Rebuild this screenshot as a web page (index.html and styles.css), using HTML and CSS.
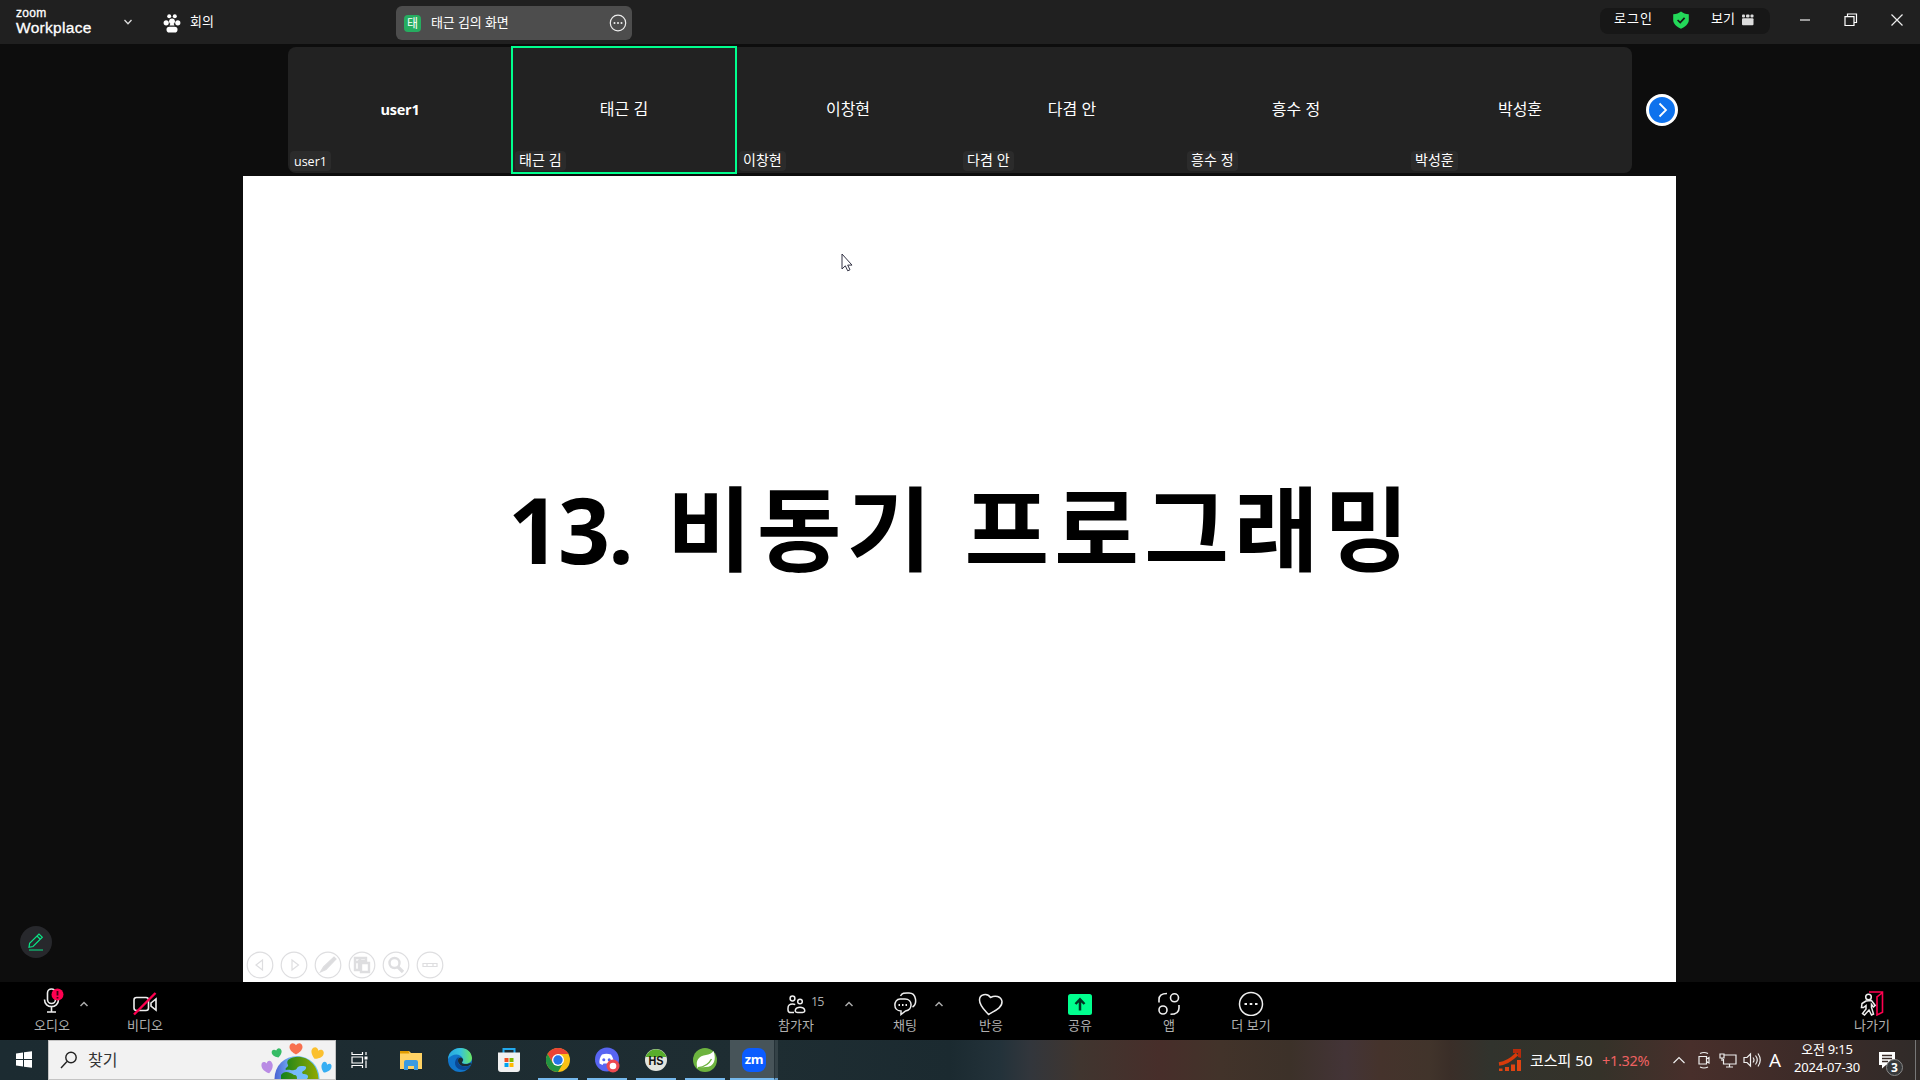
FILE: index.html
```html
<!DOCTYPE html>
<html lang="ko">
<head>
<meta charset="utf-8">
<title>Zoom Workplace</title>
<link rel="stylesheet" href="styles.css">
</head>
<body>
<div class="app">
  <header class="titlebar">
    <div class="brand"><span class="brand-zoom">zoom</span><span class="brand-name">Workplace</span></div>
    <svg class="brand-chevron" width="10" height="8" viewBox="0 0 10 8"><path d="M1.5 2l3.500 3.700L8.500 2" fill="none" stroke="#ddd" stroke-width="1.300"/></svg>
    <svg class="paw" width="18" height="20" viewBox="0 0 18 20" fill="#fff"><circle cx="6.200" cy="3.300" r="2"/><circle cx="11.800" cy="3.300" r="2"/><circle cx="3.200" cy="9.800" r="2.600"/><circle cx="14.800" cy="9.800" r="2.600"/><circle cx="9" cy="8.300" r="2.900"/><path d="M7.500 10.500h3l1 2h-5z"/><rect x="3.500" y="13.800" width="11" height="5.700" rx="2.800"/></svg>
    <span class="meeting">회의</span>
    <div class="share-tab">
      <span class="avatar">태</span><span class="share-name">태근 김의 화면</span>
      <svg width="18" height="20" viewBox="0 0 18 20"><ellipse cx="9" cy="10" rx="7.700" ry="7.900" fill="none" stroke="#eee" stroke-width="1.200"/><g fill="#eee"><circle cx="5.500" cy="10" r="1"/><circle cx="9" cy="10" r="1"/><circle cx="12.500" cy="10" r="1"/></g></svg>
    </div>
    <div class="account">
      <span class="login">로그인</span>
      <svg width="16" height="18" viewBox="0 0 16 18"><path d="M8 .5c2 1.700 4.500 2.500 7.800 2.700V9c0 4-3.800 7-7.800 8.700C4 16 .2 13 .2 9V3.200C3.500 3 6 2.200 8 .5z" fill="#23d959"/><path d="M4.600 9l2.600 2.500 4.400-4.700" fill="none" stroke="#171717" stroke-width="1.700"/></svg>
      <span class="view">보기</span>
      <svg class="view-icon" width="12" height="12" viewBox="0 0 12 12" fill="#ddd"><rect y="0.500" width="3" height="3" rx="1"/><rect x="4" y="0.500" width="3.500" height="3" rx="1"/><rect x="8.500" y="0.500" width="3" height="3" rx="1"/><rect y="4.200" width="11.500" height="7" rx="1"/></svg>
    </div>
    <div class="window-controls">
      <svg width="12" height="14" viewBox="0 0 12 14"><path d="M1 7h10" stroke="#bbb" stroke-width="1.600"/></svg>
      <svg width="14" height="14" viewBox="0 0 14 14" fill="none" stroke="#fff" stroke-width="1.200"><path d="M1 3.600h9v8.900H1zM3.500 3.500V1h9v8.500H10"/></svg>
      <svg width="14" height="14" viewBox="0 0 14 14" fill="none" stroke="#eee" stroke-width="1.200"><path d="M1.500 1.500l11 11M12.500 1.500l-11 11"/></svg>
    </div>
  </header>

  <section class="gallery">
    <div class="tiles">
      <div class="tile"><span class="tile-name latin">user1</span><span class="tile-tag">user1</span></div>
      <div class="tile active"><span class="tile-name">태근 김</span><span class="tile-tag">태근 김</span></div>
      <div class="tile"><span class="tile-name">이창현</span><span class="tile-tag">이창현</span></div>
      <div class="tile"><span class="tile-name">다겸 안</span><span class="tile-tag">다겸 안</span></div>
      <div class="tile"><span class="tile-name">흥수 정</span><span class="tile-tag">흥수 정</span></div>
      <div class="tile"><span class="tile-name">박성훈</span><span class="tile-tag">박성훈</span></div>
    </div>
    <div class="next"><svg width="32" height="32" viewBox="0 0 32 32"><circle cx="16" cy="16" r="14.500" fill="#0e72ed" stroke="#fff" stroke-width="3"/><path d="M13.500 9.500l6.500 6.500-6.500 6.500" fill="none" stroke="#fff" stroke-width="1.800"/></svg></div>
  </section>

  <main class="stage">
    <div class="side"><div class="annotate"><svg width="16" height="18" viewBox="0 0 16 18" fill="none" stroke="#0be285" stroke-width="1.200"><path d="M1 14.300l.6-4L11 1l3.300 3.200L5 13.500zM9 3l3.300 3.200M1 17h14"/></svg></div></div>
    <div class="slide">
      <h1><span class="number">13.</span> <span class="word">비동기</span> <span class="word">프로그래밍</span></h1>
      <svg class="cursor" width="12" height="20" viewBox="0 0 12 20"><path d="M1 1v15l3.300-3.200 2.400 5 2.300-1-2.300-4.700H11z" fill="#fff" stroke="#334" stroke-width="1"/></svg>
      <div class="slide-controls">
        <svg viewBox="0 0 28 28"><circle cx="14" cy="14" r="12.800"/><path d="M16.500 9v10L10 14z"/></svg>
        <svg viewBox="0 0 28 28"><circle cx="14" cy="14" r="12.800"/><path d="M12 9v10l6.500-5z"/></svg>
        <svg viewBox="0 0 28 28"><circle cx="14" cy="14" r="12.800"/><path d="M6.500 21l3-5L20 6l2 2-10 10.500z" fill="#dcdcde"/></svg>
        <svg viewBox="0 0 28 28"><circle cx="14" cy="14" r="12.800"/><path d="M7 7h11v3h-7v9H7zM7 11h4M12 7v3" stroke-width="2.400"/><path d="M13 12h8v9h-8z" stroke-width="2.400"/></svg>
        <svg viewBox="0 0 28 28"><circle cx="14" cy="14" r="12.800"/><circle cx="12.500" cy="12" r="5" stroke-width="2.400"/><path d="M16 16l5 5" stroke-width="3.200"/></svg>
        <svg viewBox="0 0 28 28"><circle cx="14" cy="14" r="12.800"/><path d="M7 12.500h14v3H7zM11 13v3M17 13v3"/></svg>
      </div>
    </div>
    <div class="side"></div>
  </main>

  <nav class="toolbar">
    <div class="tool audio"><svg width="24" height="26" viewBox="0 0 24 26"><g fill="none" stroke="#eee" stroke-width="1.600"><rect x="7.500" y="1" width="8" height="14.500" rx="4"/><path d="M4.500 11.500c0 9.500 14 9.500 14 0M11.500 18.500v5M7 24h9"/></g><circle cx="17.500" cy="6.500" r="6" fill="#ff0050"/><path d="M17.500 3v4.600M17.500 9v1.500" stroke="#400014" stroke-width="1.800"/></svg><span>오디오</span></div>
    <svg class="caret" viewBox="0 0 12 8"><path d="M2.500 6L6 2.500 9.500 6"/></svg>
    <div class="tool video"><svg width="26" height="26" viewBox="0 0 26 26"><g fill="none" stroke="#eee" stroke-width="1.600"><rect x="2" y="7.500" width="14.500" height="13" rx="2.500"/><path d="M19 13l5-4v11l-5-4z"/></g><path d="M2 24.500L23.500 3" stroke="#ff0050" stroke-width="2.400"/></svg><span>비디오</span></div>
    <div class="tool people"><svg width="24" height="26" viewBox="0 0 24 26" fill="none" stroke="#eee" stroke-width="1.500"><circle cx="8.500" cy="8.500" r="2.400"/><circle cx="16" cy="11.500" r="2.300"/><path d="M10 22.500H7c-2 0-3-.7-3-2.600v-1.600c0-3 1.700-4.300 4.500-4.300 1.200 0 2 .2 2.700.7"/><path d="M13.500 22.500c-2.500 0-2.500-1.500-2-3 1.200-3 7.800-3 9 0 .5 1.500.5 3-2 3z"/></svg><span>참가자</span><b class="count">15</b></div>
    <svg class="caret c2" viewBox="0 0 12 8"><path d="M2.500 6L6 2.500 9.500 6"/></svg>
    <div class="tool chat"><svg width="24" height="26" viewBox="0 0 24 26" fill="none" stroke="#eee" stroke-width="1.500"><path d="M8 24.500V21C-.5 21 .5 9 7 9h5c8 0 8 11 .5 12z"/><path d="M7.500 6C9.500 2.500 12 3 16 3c7.500 0 8.500 11 3.500 14"/><path d="M5.500 15h1.500M9 15h1.500M12.500 15H14" stroke-width="1.800"/></svg><span>채팅</span></div>
    <svg class="caret c3" viewBox="0 0 12 8"><path d="M2.500 6L6 2.500 9.500 6"/></svg>
    <div class="tool react"><svg width="26" height="26" viewBox="0 0 26 26" fill="none" stroke="#eee" stroke-width="1.500"><path d="M10.500 24.500C7 20.500 1.500 16 1.500 10c0-5.500 7.500-7.500 11-2.500C17 5 23 6 24 11.500 24.500 18 16 21 10.500 24.500z" stroke-linejoin="round"/></svg><span>반응</span></div>
    <div class="tool share"><svg width="24" height="26" viewBox="0 0 24 26"><rect y="4" width="24" height="21" rx="2.500" fill="#00ff8e"/><path d="M12 20.500V9.500M7.500 14L12 9.300l4.500 4.700" fill="none" stroke="#032" stroke-width="2.500"/></svg><span>공유</span></div>
    <div class="tool apps"><svg width="24" height="26" viewBox="0 0 24 26" fill="none" stroke="#eee" stroke-width="1.600"><circle cx="17.500" cy="7.800" r="4"/><circle cx="6" cy="20" r="4"/><path d="M2 12.500v-3c0-4 2-6 8-6M22 15v3c0 4.500-3 6.300-8.500 6.300"/></svg><span>앱</span></div>
    <div class="tool more"><svg width="26" height="26" viewBox="0 0 26 26"><circle cx="13" cy="14" r="11.500" fill="none" stroke="#eee" stroke-width="1.500"/><path d="M6.500 14h2.500M11.700 14h2.600M17 14h2.500" stroke="#eee" stroke-width="2"/></svg><span>더 보기</span></div>
    <div class="tool leave"><svg width="26" height="26" viewBox="0 0 26 26" fill="none"><path d="M10 2h13.500v20.300L18 25V7l5-4" stroke="#ff0050" stroke-width="1.600"/><g stroke="#eee" stroke-width="1.500"><circle cx="9.500" cy="7" r="2.800"/><path d="M7 11L3 13.500l-.5 4h2L7 15.500V19L3.500 23.500l2 1.500L10 20l2.500 5 2-1-2-6.500v-3l2 2.500 1.700-1.500-3.700-5z"/></g></svg><span>나가기</span></div>
  </nav>

  <footer class="taskbar">
    <div class="start"><svg width="16" height="17" viewBox="0 0 16 17" fill="#fff"><path d="M0 2.500L7 1.500v6.500H0zM8 1.300L16 .2V8H8zM0 9h7v6.500L0 14.500zM8 9h8v7.800L8 15.700z"/></svg></div>
    <div class="search">
      <svg width="18" height="18" viewBox="0 0 18 18" fill="none" stroke="#222" stroke-width="1.400"><circle cx="11" cy="6.500" r="5.200"/><path d="M7 10.500L1 17"/></svg>
      <span>찾기</span>
      <svg class="earth" width="72" height="38" viewBox="0 0 72 38">
        <defs><linearGradient id="sea"><stop offset="0" stop-color="#4a62d2"/><stop offset=".4" stop-color="#79b8fa"/><stop offset="1" stop-color="#67c6fd"/></linearGradient><linearGradient id="land"><stop offset="0" stop-color="#13811c"/><stop offset="1" stop-color="#92a900"/></linearGradient>
        <path id="heart" d="M0 6.500C-3 5-7 2-7-1.500-7-6.500-2-7 0-3.500 2-7 7-6.500 7-1.500 7 2 3 5 0 6.500z"/></defs>
        <circle cx="36" cy="37.500" r="22.500" fill="url(#sea)"/>
        <path d="M27 19c7-5.500 18-4 24 3 4 4 6 9 6.500 16H46c3-4-1-5-4-5-3-3 3-3 3-6 1-2-3-2-5-2-5 0-3 4-7 4-2 1-4-1-8 0-2-2 3-3 2-5-1-2-1-3 0-5zM20 34c3-5 9-3 13 0 3 0 3 2 3 4H20z" fill="url(#land)"/>
        <use href="#heart" transform="translate(35 7.500) scale(.93)" fill="#f8704e"/>
        <use href="#heart" transform="translate(16 12) rotate(-18) scale(.72)" fill="#36bc65"/>
        <use href="#heart" transform="translate(56 12.500) rotate(25) scale(.9)" fill="#fbc02e"/>
        <use href="#heart" transform="translate(6.500 26) rotate(-15) scale(.8 1)" fill="#b98be4"/>
        <use href="#heart" transform="translate(65 26.500) rotate(22) scale(.72 .85)" fill="#35aef3"/>
      </svg>
    </div>
    <div class="task plain"><svg width="18" height="18" viewBox="0 0 18 18" fill="none" stroke="#fff" stroke-width="1.200"><path d="M1 1v2.500h10.500V1M1 17v-2.500h10.500V17M1 6h10.500v6H1zM15 1v3M15 9.500V17"/><path d="M13.500 7h3" stroke-width="3"/></svg></div>
    <div class="task plain explorer"><svg width="24" height="24" viewBox="0 0 24 24"><path d="M1 3h9l2 2h11v16H1z" fill="#ffd264"/><path d="M1 3h8.500l1 2.500H1z" fill="#e19b00"/><path d="M5 22v-8q0-2 2-2h10q2 0 2 2v8h-4v-4H9v4z" fill="#3b9be0"/></svg></div>
    <div class="task plain"><svg width="24" height="24" viewBox="0 0 24 24"><defs><linearGradient id="edge"><stop offset="0" stop-color="#27a8df"/><stop offset=".5" stop-color="#35c1df"/><stop offset="1" stop-color="#6be860"/></linearGradient></defs><circle cx="12" cy="12" r="12" fill="#1075ca"/><path d="M0 11C1-3 23-4 24 10c0 5-6 7-10 5-1-1 2-1 1-4C13 5 4 5 0 11z" fill="url(#edge)"/><path d="M9 10c-5 6 0 13 8 12 3-.5 5-3 6-5-7 4-14 0-13-5 .1-1 .5-2 1-3z" fill="#0a4896"/><path d="M14.500 10.500c2 2-1.500 3 0 5 3 1 7 .5 8-1l.5 2c-6 4-13 1-13-4 0-3 3-4 4.500-2z" fill="#1c2b30"/></svg></div>
    <div class="task plain"><svg width="24" height="24" viewBox="0 0 24 24"><path d="M6.500 6V1h11v5" fill="none" stroke="#22a9ee" stroke-width="2"/><path d="M1 4.500h22V21q0 3-3 3H4q-3 0-3-3z" fill="#f1f1f1"/><path d="M7.500 10h4v4h-4z" fill="#f25022"/><path d="M12.500 10h4v4h-4z" fill="#7fba00"/><path d="M7.500 15h4v4h-4z" fill="#00a4ef"/><path d="M12.500 15h4v4h-4z" fill="#ffb900"/></svg></div>
    <div class="task"><svg width="24" height="24" viewBox="0 0 24 24"><circle cx="12" cy="12" r="12" fill="#fbc116"/><path d="M1.600 6A12 12 0 0 1 22.400 6H12L6.800 15z" fill="#ea4335"/><path d="M1.600 6A12 12 0 0 0 12 24l5.200-9H6.800z" fill="#229342"/><circle cx="12" cy="12" r="6" fill="#fff"/><circle cx="12" cy="12" r="4.700" fill="#2475e9"/></svg></div>
    <div class="task"><svg width="26" height="26" viewBox="0 0 26 26"><circle cx="13" cy="12.500" r="12" fill="#5865f2"/><path d="M8 7.500c3-1 6-1 9 0 2 3 3 6 2.500 9l-3 1.500-1-1.500h-6l-1 1.500-3-1.500C5 13.500 6 10 8 7.500z" fill="#fff"/><circle cx="9.800" cy="12.700" r="1.500" fill="#5865f2"/><circle cx="15.200" cy="12.700" r="1.500" fill="#5865f2"/><circle cx="19" cy="19" r="6.500" fill="#ed4950"/><circle cx="19" cy="19" r="3.300" fill="#fff"/></svg></div>
    <div class="task"><svg width="24" height="24" viewBox="0 0 24 24"><circle cx="12" cy="12" r="11" fill="#e2e4df"/><path d="M1.500 9a11 11 0 0 1 21 0z" fill="#58ad2c"/><text x="12" y="16.500" text-anchor="middle" textLength="15" lengthAdjust="spacingAndGlyphs" class="hs">HS</text></svg></div>
    <div class="task"><svg width="24" height="24" viewBox="0 0 24 24"><circle cx="12" cy="12" r="12" fill="#6db33f"/><path d="M20.500 3c3 8 1 16-8 16-3 .3-6 0-8 1.200C2 12 6 8 13 7c3-.4 6-1.500 7.500-4z" fill="#fff"/><path d="M5 19.700C11 19 16 16 18.500 11" fill="none" stroke="#6db33f" stroke-width="1.400"/></svg></div>
    <div class="task current"><span class="zm">zm</span></div>
    <div class="task-stack"></div>
    <div class="stocks"><svg width="24" height="24" viewBox="0 0 24 24"><path d="M1 16c8-1 13-5 18-10" fill="none" stroke="#d83b0b" stroke-width="3.500"/><path d="M15 1h8v9l-3-1V5h-5z" fill="#b72b0c"/><path d="M1 20.500h3.500V23H1zM7 19h4v4H7zM13 16.500h4V23h-4zM19 12h4v11h-4z" fill="#df4412"/></svg><span class="index">코스피 50</span><span class="gain">+1.32%</span></div>
    <div class="tray">
      <svg width="14" height="18" viewBox="0 0 14 18"><path d="M1.500 12L7 6.500l5.500 5.500"/></svg>
      <svg class="cam" width="14" height="18" viewBox="0 0 14 18"><path d="M3 2.500q4-2 8 0M3 16q4 2 8 0M2 5.500h7.500v7.500H2zM9.500 8L12 6.500v5.500L9.500 10.500"/></svg>
      <svg class="net" width="18" height="18" viewBox="0 0 18 18"><path d="M5.500 4H17v9H4.500V8M7 16h7M10.500 13v3M1 3h4v4H1zM3 7v3"/></svg>
      <svg class="vol" width="18" height="18" viewBox="0 0 18 18"><path d="M1 6.500h3L7.500 3v12L4 11.500H1zM10 6.500q2 2.500 0 5M12.500 4.500q3.500 4.500 0 9M15 2.500q4.500 6.500 0 13"/></svg>
      <span class="ime">A</span>
    </div>
    <div class="clock"><span>오전 9:15</span><span>2024-07-30</span></div>
    <div class="notify"><svg width="26" height="26" viewBox="0 0 26 26"><path d="M1 1h16v13H8l-4 3.500V14H1z" fill="#fff"/><path d="M4 4.500h10M4 7.500h10M4 10.500h6" stroke="#3a2d2a" stroke-width="1.300"/><circle cx="16.500" cy="16.500" r="8" fill="#37393b" stroke="#888" stroke-width="1"/><text x="16.500" y="20.500" text-anchor="middle" class="num">3</text></svg></div>
    <div class="desktop-edge"></div>
  </footer>
</div>
</body>
</html>
```
FILE: styles.css
```css
* { box-sizing: border-box; }
body { margin: 0; background: #0d0d0d; font-family: "Noto Sans", "Noto Sans CJK KR", sans-serif; color: #fff; }
svg { display: block; flex: none; }
.app { width: 1920px; height: 1080px; overflow: hidden; display: grid; grid-template-rows: 44px 132px 806px 58px 40px; }
span { white-space: nowrap; }

/* Title bar */
.titlebar { background: #202020; display: flex; align-items: flex-start; font-family: "Noto Sans CJK KR", sans-serif; }
.brand { width: 92px; margin: 8px 0 0 16px; display: flex; flex-direction: column; font-family: "Liberation Sans", sans-serif; }
.brand-zoom { font-size: 12px; line-height: 11px; letter-spacing: .3px; -webkit-text-stroke: .3px #fff; }
.brand-name { font-size: 15.500px; line-height: 17px; letter-spacing: .3px; -webkit-text-stroke: .3px #fff; }
.brand-chevron { margin: 18px 0 0 15px; }
.paw { margin: 13px 0 0 30px; }
.meeting { font-size: 13px; line-height: 20px; margin: 11px 0 0 9px; width: 24px; }
.share-tab { display: flex; align-items: center; width: 236px; height: 34px; margin: 6px 0 0 182px; padding: 0 5px 0 8px; background: #4d4d4d; border-radius: 6px; }
.avatar { width: 17px; height: 17px; background: #26ad60; border-radius: 4px; font-size: 12px; line-height: 15px; text-align: center; }
.share-name { font-size: 13px; line-height: 20px; margin: -3px auto 0 10px; letter-spacing: -.2px; }
.account { display: flex; align-items: center; width: 170px; height: 26px; margin: 8px 0 0 auto; padding: 0 16px 0 14px; background: #171717; border-radius: 8px; font-size: 13px; line-height: 18px; }
.login { width: 59px; margin-top: -6px; letter-spacing: 1px; }
.account svg { margin-top: -2px; }
.view { width: 31px; margin: -6px 0 0 22px; }
.window-controls { display: flex; justify-content: space-between; width: 105px; margin: 13px 16px 0 29px; }

/* Participants strip */
.gallery { display: flex; align-items: flex-start; padding: 3px 0 0 288px; }
.tiles { display: grid; grid-template-columns: repeat(6, 224px); height: 126px; background: #222; border-radius: 8px; }
.tile { position: relative; display: flex; align-items: center; justify-content: center; font-family: "Noto Sans CJK KR", sans-serif; }
.active { z-index: 1; box-shadow: 0 0 0 1px #00ff8e, inset 0 0 0 1px #00ff8e; }
.tile-name { font-size: 16px; line-height: 20px; margin-top: -4px; }
.latin { font-family: "Open Sans", sans-serif; font-weight: 700; font-size: 14.500px; letter-spacing: -.2px; margin-top: -1px; }
.tile-tag { position: absolute; left: 3px; bottom: 2px; height: 20px; padding: 0 4px; border-radius: 4px; background: #2b2b2b; font-size: 14px; line-height: 16px; }
.tile:first-child .tile-tag { left: 2px; font-family: "Open Sans", sans-serif; font-size: 12.500px; line-height: 21px; }
.next { margin: 47px 0 0 14px; }

/* Shared screen */
.stage { display: grid; grid-template-columns: 243px 1433px 244px; }
.side { padding: 750px 0 0 20px; }
.annotate { width: 32px; height: 32px; border-radius: 50%; background: #27282c; display: grid; place-items: center; }
.slide { position: relative; background: #fff; color: #000; }
.slide h1 { display: flex; margin: 0; padding: 278px 0 0 265px; font: 700 92px/140px "Noto Sans CJK KR", sans-serif; white-space: nowrap; }
.number { width: 159px; padding-top: 5px; font-family: "Open Sans", sans-serif; font-size: 91px; letter-spacing: -2px; }
.word { letter-spacing: 5.200px; }
.word + .word { margin-left: 28px; }
.cursor { position: absolute; left: 598px; top: 77px; }
.slide-controls { position: absolute; left: 3px; bottom: 3px; display: flex; gap: 6px; }
.slide-controls svg { width: 28px; height: 28px; fill: none; stroke: #dedee0; stroke-width: 1.200; }

/* Meeting toolbar */
.toolbar { background: #000; display: flex; align-items: flex-start; padding: 6px 21px 0 25px; }
.tool { position: relative; width: 54px; display: flex; flex-direction: column; align-items: center; color: #b0b0b0; font: 13px/18px "Noto Sans CJK KR", sans-serif; }
.tool svg { margin-top: 2px; }
.tool span { margin-top: 0; }
.audio svg { margin-top: 0; }
.audio span { margin-top: 2px; }
.caret { width: 12px; height: 8px; margin: 12px 0 0 -1px; fill: none; stroke: #aaa; stroke-width: 1.500; }
.video { margin-left: 28px; }
.people { margin-left: 597px; }
.count { position: absolute; left: 42px; top: 6px; font: 12.500px/16px "Open Sans", sans-serif; letter-spacing: -.8px; }
.c2 { margin-left: 20px; }
.chat { margin-left: 23px; }
.c3 { margin-left: 1px; }
.react { margin-left: 19px; }
.share, .apps { margin-left: 35px; }
.more { margin-left: 28px; }
.leave { margin-left: auto; }

/* Windows taskbar */
.taskbar { display: flex; align-items: stretch; background: linear-gradient(90deg, #1c2b31 0, #1e2d32 770px, #1b2a30 950px, #23323a 1000px, #32363c 1030px, #40352f 1080px, #472e2a 1160px, #42332a 1220px, #3c3129 1290px, #433437 1345px, #45332c 1380px, #41342b 1430px, #3a2e28 1450px, #31332d 1490px, #353229 1600px, #482f2b 1690px, #3d2b28 1800px, #302b29 1920px); }
.start { width: 48px; padding: 11px 0 0 16px; }
.search { width: 288px; display: flex; align-items: center; padding-left: 11px; background: #f2f2f2; border: 1px solid #c4c4c4; color: #333; font: 16px/20px "Noto Sans CJK KR", sans-serif; }
.search span { margin: -2px 0 0 10px; }
.earth { margin-left: auto; margin-right: 2px; }
.task { width: 40px; margin-left: 9px; display: grid; place-items: center; border-bottom: 2px solid #76b9ed; }
.task svg { margin-top: 2px; }
.plain { border-color: transparent; }
.search + .task { margin-left: 4px; }
.task.explorer { margin-left: 11px; }
.current { width: 44px; margin-left: 5px; padding-left: 4px; background: #475459; }
.task-stack { width: 4px; background: #344247; border-left: 1px solid #253238; border-bottom: 2px solid #639bc8; }
.zm { width: 24px; height: 24px; margin-top: 2px; border-radius: 8px; background: #0b5cff; font: 700 13px/22px "Open Sans", sans-serif; text-align: center; letter-spacing: -.4px; }
.hs { font: 700 12px "Liberation Sans", sans-serif; fill: #111; }
.stocks { display: flex; align-items: center; margin-left: auto; font: 16px/20px "Noto Sans", "Noto Sans CJK KR", sans-serif; }
.index { width: 72px; margin: -1px 0 0 8px; font-size: 15px; }
.gain { width: 47px; color: #ef6262; font-size: 14.500px; letter-spacing: -.3px; }
.tray { display: flex; align-items: center; margin-left: 23px; }
.tray svg { fill: none; stroke: #eee; stroke-width: 1.200; }
.cam { margin-left: 11px; }
.net { margin-left: 8px; }
.vol { margin-left: 6px; }
.ime { font: 19px/20px "Open Sans", sans-serif; width: 14px; margin-left: 8px; }
.clock { display: flex; flex-direction: column; align-items: center; width: 68px; margin-left: 10px; font: 13px/18px "Noto Sans", "Noto Sans CJK KR", sans-serif; letter-spacing: -.2px; }
.notify { margin: 11px 0 0 17px; }
.num { font: 700 12px "Noto Sans", sans-serif; fill: #fff; }
.desktop-edge { width: 5px; margin-left: 11px; border-left: 1px solid #777; }
```
